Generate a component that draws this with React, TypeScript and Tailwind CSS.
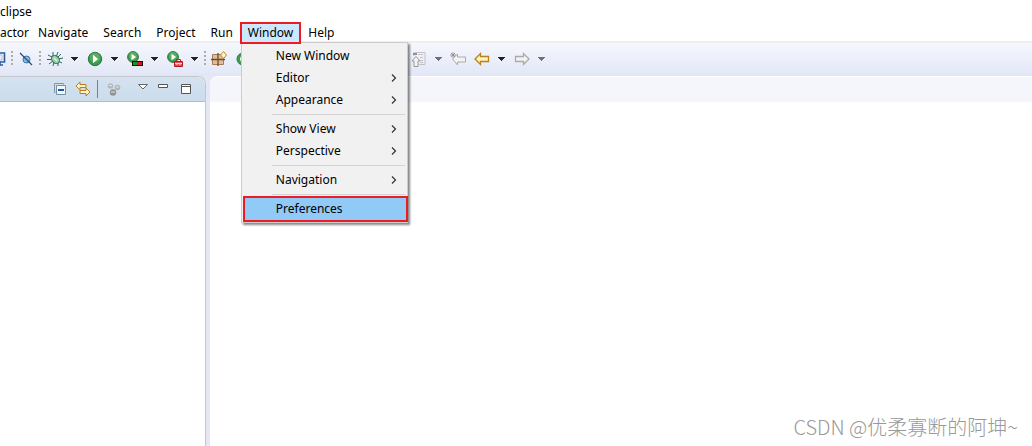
import React from 'react';

type MenuEntry = { label: string; submenu?: boolean };

const windowMenu: MenuEntry[][] = [
  [{ label: 'New Window' }, { label: 'Editor', submenu: true }, { label: 'Appearance', submenu: true }],
  [{ label: 'Show View', submenu: true }, { label: 'Perspective', submenu: true }],
  [{ label: 'Navigation', submenu: true }],
];

const Icon = ({ children, className = 'w-4' }: { children: React.ReactNode; className?: string }) => (
  <svg viewBox="0 0 16 16" className={`h-4 shrink-0 ${className}`} fill="none" aria-hidden="true">
    {children}
  </svg>
);

function ToolButton({ label, children }: { label: string; children: React.ReactNode }) {
  return (
    <button aria-label={label} className="h-4 w-4 shrink-0">
      <Icon>{children}</Icon>
    </button>
  );
}

function Caret({ label, muted }: { label: string; muted?: boolean }) {
  return (
    <button aria-label={label} className="h-4 w-4 shrink-0">
      <Icon>
        <path d="M5 6h7v1h-1v1h-1v1H9v1H8V9H7V8H6V7H5z" fill={muted ? '#707079' : '#222'} />
      </Icon>
    </button>
  );
}

const Grip = () => (
  <svg viewBox="0 0 4 16" className="h-4 w-1 shrink-0" aria-hidden="true">
    <path d="M1 0h2v2H1zM1 4h2v2H1zM1 8h2v2H1zM1 12h2v2H1z" fill="#b0aca0" />
  </svg>
);

function Play({ small }: { small?: boolean }) {
  return small ? (
    <>
      <circle cx="6" cy="6" r="5.4" fill="#3c9a4c" stroke="#287a38" />
      <circle cx="6" cy="5" r="4" fill="#78bd7b" opacity=".5" />
      <path d="M4.5 2.8v6.4L9 6z" fill="#fff" />
    </>
  ) : (
    <>
      <circle cx="8" cy="8" r="6.7" fill="#3d9b4c" stroke="#24763a" />
      <circle cx="8" cy="6.5" r="5" fill="#7cc080" opacity=".45" />
      <path d="M6 3.8v8.4L11 8z" fill="#fff" />
    </>
  );
}

function Arrow({ right, muted }: { right?: boolean; muted?: boolean }) {
  return (
    <path
      d={right ? 'M15 8 9.5 2.5v3h-8v5h8v3z' : 'M1 8l5.5-5.5v3h8v5h-8v3z'}
      fill={muted ? '#f2f2f2' : '#fff3b8'}
      stroke={muted ? '#aaa' : '#b9801b'}
      strokeWidth="1.3"
    />
  );
}

function MenuBar() {
  const item = 'h-5 pl-[7px] pr-2 leading-5';
  return (
    <nav className="flex h-5 whitespace-nowrap">
      <button className="h-5 pr-[2px] leading-5">actor</button>
      <button className={item}>Navigate</button>
      <button className={item}>Search</button>
      <button className={item}>Project</button>
      <button className={item}>Run</button>
      <div className="relative">
        <button
          aria-haspopup="menu"
          aria-expanded="true"
          className="relative z-20 h-5 bg-[#cce8ff] px-[7px] leading-5 outline-2 -outline-offset-1 outline-[#ed1c24]"
        >
          Window
        </button>
        <WindowMenu />
      </div>
      <button className="h-5 px-2 leading-5">Help</button>
    </nav>
  );
}

function WindowMenu() {
  return (
    <div
      role="menu"
      className="absolute top-[19px] left-0 z-10 w-[167px] border border-[#ccc] bg-[#f1f1f1] py-[2px] shadow-[2px_2px_2px_#0007]"
    >
      {windowMenu.map((group) => (
        <div key={group[0].label}>
          {group.map((entry) => (
            <button
              key={entry.label}
              role="menuitem"
              className="flex h-[22px] w-full items-center justify-between pr-[9px] pl-[34px] text-left"
            >
              {entry.label}
              {entry.submenu && (
                <svg viewBox="0 0 8 8" className="h-2 w-2" fill="none" aria-hidden="true">
                  <path d="M2 .5 5.500 4 2 7.500" stroke="#333" strokeWidth="1.2" />
                </svg>
              )}
            </button>
          ))}
          <hr className="my-[3px] mr-[2px] ml-[30px] border-[#d4d4d4]" />
        </div>
      ))}
      <button
        role="menuitem"
        className="mx-[3px] flex h-[22px] w-[161px] items-center bg-[#91c9f7] pl-[31px] outline-2 outline-[#ed1c24]"
      >
        Preferences
      </button>
    </div>
  );
}

function Toolbar() {
  return (
    <div className="flex h-[35px] items-center border-t-2 border-[#eeeef0] bg-linear-to-b from-[#f6f8fe] to-[#e1e6f6] pb-[2px]">
      <svg viewBox="10 0 6 16" className="h-4 w-[6px] shrink-0" fill="none" aria-hidden="true">
        <path d="M8 2h6.5v9H8M8 14h5M10 11v3" stroke="#315b9f" strokeWidth="1.6" />
        <path d="M8 4h4v5H8" stroke="#a6c6ea" />
      </svg>
      <div className="ml-1 flex items-center gap-1">
        <Grip />
        <ToolButton label="Skip All Breakpoints">
          <circle cx="8.500" cy="8.500" r="3.500" fill="#8abce0" stroke="#3a75a4" />
          <path d="M2 2l12 12" stroke="#244d80" strokeWidth="1.3" />
        </ToolButton>
        <Grip />
      </div>
      <div className="ml-[5px] flex items-center gap-[5px]">
        <div className="flex gap-[3px]">
          <ToolButton label="Debug">
            <path
              d="M6 1v4M11 1 9.500 5M1 4l4 2M0 8.500h5M2 13l4-3M6 15l1-4M11 15v-4M15 12l-4-2M16 7l-5 1M14 3l-4 4"
              stroke="#2f6664"
            />
            <ellipse cx="8.500" cy="8.500" rx="4.500" ry="3.500" transform="rotate(45 8.500 8.500)" fill="#9bd0a4" stroke="#2d7071" />
            <path d="M7 7l3 3" stroke="#e0f2c0" strokeWidth="1.5" />
          </ToolButton>
          <Caret label="Debug options" />
        </div>
        <div className="flex gap-[3px]">
          <ToolButton label="Run">
            <Play />
          </ToolButton>
          <Caret label="Run options" />
        </div>
        <div className="flex gap-[3px]">
          <ToolButton label="Coverage">
            <Play small />
            <path d="M5 10h11v5H5z" fill="#111" />
            <path d="M6 11h4v3H6z" fill="#149628" />
            <path d="M10 11h5v3h-5z" fill="#e3121c" />
          </ToolButton>
          <Caret label="Coverage options" />
        </div>
        <div className="flex gap-[3px]">
          <ToolButton label="External Tools">
            <Play small />
            <path d="M9.500 10.500V8.500h4v2" stroke="#c02027" />
            <path d="M7.500 10.500h8v5h-8z" fill="#e04b4e" stroke="#b81820" />
            <path d="M8 12.500h7M10 12v2M13 12v2" stroke="#ffd6d2" />
          </ToolButton>
          <Caret label="External Tools options" />
        </div>
      </div>
      <div className="ml-px flex items-center gap-1">
        <Grip />
        <ToolButton label="New Java Package">
          <path d="M1.500 3.500h11v10h-11z" fill="#dfbf98" stroke="#a87a55" />
          <path d="M7 2v13M0 8.500h14" stroke="#74482f" strokeWidth="1.3" />
          <path d="M12.500 .5l3 3.500-3 3.500-3-3.500z" fill="#fff7c0" stroke="#b98b20" />
        </ToolButton>
      </div>
      <div className="ml-2 flex">
        <ToolButton label="New Java Class">
          <circle cx="8" cy="8" r="6" fill="#409b55" stroke="#287a38" />
          <path d="M11 6a3 3 0 1 0 0 4" stroke="#fff" strokeWidth="1.5" />
        </ToolButton>
      </div>
      <div className="ml-[159px] flex items-center gap-1">
        <ToolButton label="Previous Edit">
          <path d="M5 1.500h10v12H9M4 1v4M8 3.500h5M10 6.500h3M10 9.500h3M10 11.500h3" stroke="#c2c2c2" />
          <path d="M3 3h4" stroke="#909090" strokeWidth="2" />
          <path d="M6 5.500 10 10H8v5.500H4V10H2z" fill="#f4f4f4" stroke="#999" />
        </ToolButton>
        <Caret label="Previous Edit options" muted />
        <ToolButton label="Last Edit Location">
          <path d="M2.500 8l5-5v3h8v5h-8v3z" fill="#f2f2f2" stroke="#aaa" />
          <path d="M3 1v6M0 4h6M1 2l4 4M5 2 1 6" stroke="#888" strokeWidth=".8" />
        </ToolButton>
      </div>
      <div className="ml-2 flex items-center gap-[5px]">
        <div className="flex gap-[3px]">
          <ToolButton label="Back">
            <Arrow />
          </ToolButton>
          <Caret label="Back history" />
        </div>
        <div className="flex gap-[3px]">
          <ToolButton label="Forward">
            <Arrow right muted />
          </ToolButton>
          <Caret label="Forward history" muted />
        </div>
      </div>
    </div>
  );
}

function ExplorerPane() {
  return (
    <section className="w-[206px] shrink-0 rounded-tr-lg border-t border-r border-[#c3c6cc] bg-white">
      <div className="flex h-[25px] items-center justify-end rounded-tr-lg border-b border-[#afbccd] bg-linear-to-b from-[#d5e2f0] to-[#cbdcec] pr-[10px]">
        <ToolButton label="Collapse All">
          <path d="M1.500 11.500v-9h9v1M1.500 11.500h1" stroke="#8095a5" />
          <path d="M3.500 4.500h9v9h-9z" fill="#edf8fd" stroke="#7890a2" />
          <path d="M5 9h6" stroke="#195a9b" strokeWidth="2" />
        </ToolButton>
        <div className="ml-[6px] flex">
          <ToolButton label="Link with Editor">
            <path d="M1 5l4-4v2.500h6v3H5V9z" fill="#fff5c2" stroke="#b87d22" />
            <path d="M15 11l-4-4v2.500H5v3h6V15z" fill="#fff5c2" stroke="#b87d22" />
          </ToolButton>
        </div>
        <div className="mr-2 ml-[6px] h-[18px] w-px bg-[#77818d]" />
        <ToolButton label="Focus on Active Task">
          <circle cx="4.500" cy="5" r="2.800" fill="#b8b8b8" />
          <circle cx="11.500" cy="6.500" r="2.800" fill="#b4b4b4" />
          <circle cx="7" cy="11.500" r="3.200" fill="#929292" />
          <path d="M3 4.500h3M10 6h3M5 11h4" stroke="#e4e4e4" />
        </ToolButton>
        <div className="ml-[14px] flex gap-1">
          <ToolButton label="View Menu">
            <path d="M2.500 3.500h9l-4.500 4.500z" fill="#fff" stroke="#666" />
          </ToolButton>
          <ToolButton label="Minimize">
            <path d="M2.500 3.500h9v3h-9z" fill="#fff" stroke="#555" />
          </ToolButton>
        </div>
        <div className="ml-[7px] flex">
          <ToolButton label="Maximize">
            <path d="M2.500 3.500h9v9h-9zM2 5.500h10" fill="#fff" stroke="#555" />
          </ToolButton>
        </div>
      </div>
    </section>
  );
}

export default function App() {
  return (
    <div className="relative flex min-h-screen flex-col overflow-hidden bg-white font-['Noto_Sans',sans-serif] text-[12px] text-black">
      <header>
        <h1 className="h-[23px] leading-[23px]">clipse</h1>
        <MenuBar />
      </header>
      <div className="-mt-[2px] flex flex-1 flex-col">
        <Toolbar />
        <main className="flex flex-1 gap-1 bg-[#e4e8f6]">
          <ExplorerPane />
          <section className="min-w-0 flex-1 rounded-tl-lg border-t border-white bg-white">
            <div className="h-[25px] rounded-tl-lg bg-[#f4f6fc]" />
          </section>
        </main>
      </div>
      <p className="absolute right-[14px] bottom-[5px] font-['Noto_Sans_CJK_SC',sans-serif] text-[20px] leading-7 font-light text-[#999]">
        CSDN @优柔寡断的阿坤~
      </p>
    </div>
  );
}
